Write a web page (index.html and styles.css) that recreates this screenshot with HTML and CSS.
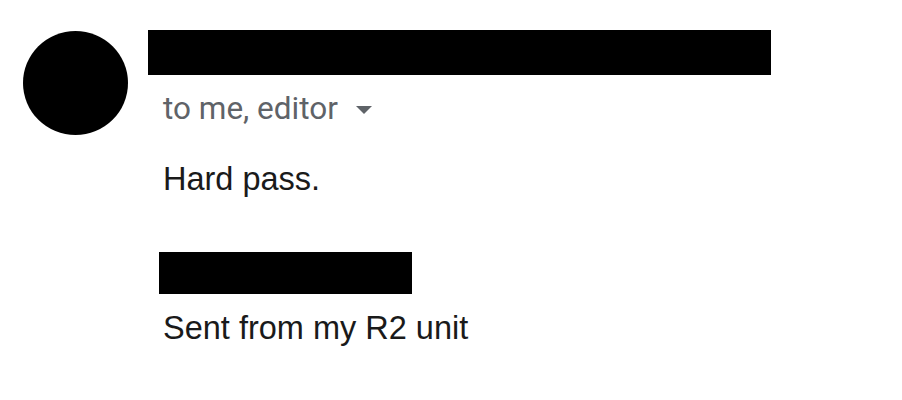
FILE: index.html
```html
<!DOCTYPE html>
<html lang="en">
<head>
<meta charset="utf-8">
<link rel="stylesheet" href="styles.css">
</head>
<body>
<div class="message">
  <div class="avatar"></div>
  <div class="content">
    <div class="redact redact-name"></div>
    <div class="recipients">to me, editor <span class="caret"></span></div>
    <div class="body">
      <p class="line">Hard pass.</p>
      <div class="redact redact-sig"></div>
      <p class="line">Sent from my R2 unit</p>
    </div>
  </div>
</div>
</body>
</html>
```
FILE: styles.css
```css
html, body {
  margin: 0;
  padding: 0;
  background: #ffffff;
}
.message {
  display: flex;
  padding: 30px 0 0 23px;
}
.avatar {
  width: 105px;
  height: 104px;
  border-radius: 50%;
  background: #000;
  flex-shrink: 0;
  margin-top: 1px;
}
.content {
  display: flex;
  flex-direction: column;
  margin-left: 35px;
}
.redact {
  background: #000;
}
.redact-name {
  width: 623px;
  height: 45px;
  margin-left: -15px;
}
.recipients {
  margin-top: 16px;
  font-family: Roboto, "Liberation Sans", sans-serif;
  font-size: 31.5px;
  line-height: 36px;
  color: #5f6368;
  display: flex;
  align-items: center;
  gap: 18px;
}
.caret {
  width: 0;
  height: 0;
  border-left: 8px solid transparent;
  border-right: 8px solid transparent;
  border-top: 8px solid #5f6368;
  margin-top: 2px;
}
.body {
  margin-top: 34px;
  font-family: "Liberation Sans", Arial, sans-serif;
  font-size: 32.5px;
  line-height: 36px;
  color: #1a1a1a;
}
.line {
  margin: 0;
}
.redact-sig {
  width: 253px;
  height: 42px;
  margin: 55px 0 16px -4px;
}
```
